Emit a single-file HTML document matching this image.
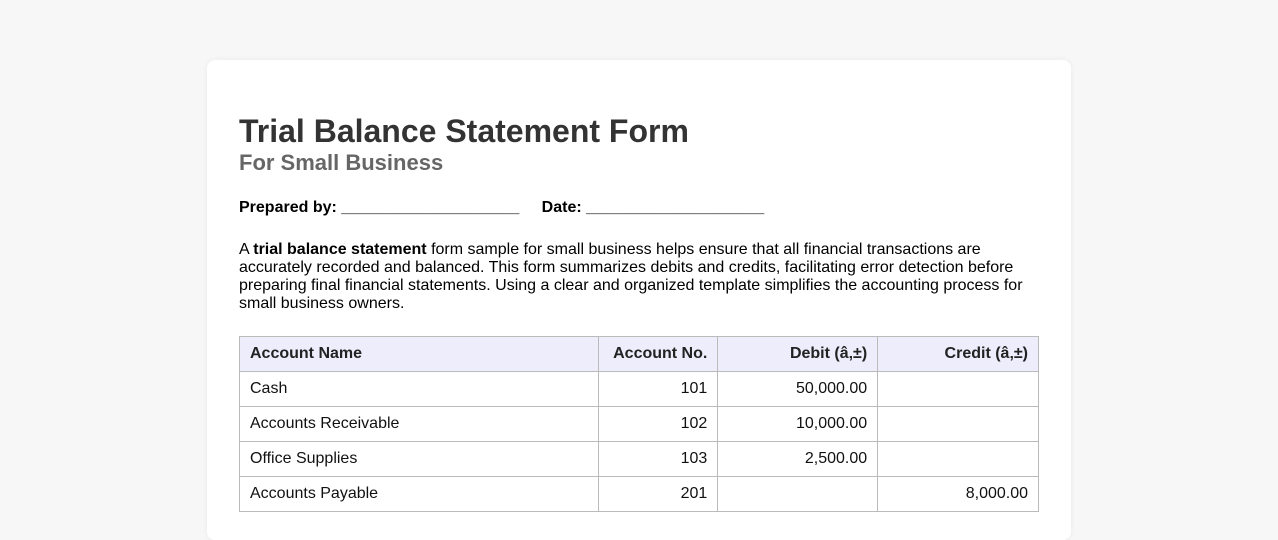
<!DOCTYPE html>
<html><head><style>
html,body{margin:0;height:501px;overflow:hidden;}
body{background:#f7f7f7;font-family:"Liberation Sans",Arial,sans-serif;color:#000;}
.card{position:absolute;left:207px;top:60px;width:864px;height:480px;background:#fff;border-radius:8px;box-shadow:0 0 6px rgba(0,0,0,0.06);}
.in{position:absolute;left:32px;top:0;width:800px;}
h1{position:absolute;top:53px;margin:0;font-size:32px;line-height:37px;color:#333;white-space:nowrap;}
h2{position:absolute;top:90px;margin:0;font-size:22px;line-height:25px;color:#666;white-space:nowrap;}
.prep{position:absolute;top:139px;font-size:16px;line-height:18px;font-weight:bold;white-space:nowrap;}
p{position:absolute;top:181px;margin:0;font-size:16px;line-height:18px;width:800px;}
table{position:absolute;top:276px;left:0;border-collapse:collapse;width:800px;font-size:16px;}
td,th{border:1px solid #bbb;height:35px;padding:0 10px;box-sizing:border-box;}
th{background:#ededfc;text-align:right;color:#222;}
th:first-child,td:first-child{text-align:left;}
td{text-align:right;color:#111;}
</style></head><body>
<div class="card"><div class="in">
<h1>Trial Balance Statement Form</h1>
<h2>For Small Business</h2>
<div class="prep">Prepared by: ____________________ <span style="margin-left:18px">Date: ____________________</span></div>
<p>A <b>trial balance statement</b> form sample for small business helps ensure that all financial transactions are accurately recorded and balanced. This form summarizes debits and credits, facilitating error detection before preparing final financial statements. Using a clear and organized template simplifies the accounting process for small business owners.</p>
<table>
<colgroup><col style="width:360px"><col style="width:119px"><col style="width:160px"><col style="width:161px"></colgroup>
<tr><th>Account Name</th><th>Account No.</th><th>Debit (â‚±)</th><th>Credit (â‚±)</th></tr>
<tr><td>Cash</td><td>101</td><td>50,000.00</td><td></td></tr>
<tr><td>Accounts Receivable</td><td>102</td><td>10,000.00</td><td></td></tr>
<tr><td>Office Supplies</td><td>103</td><td>2,500.00</td><td></td></tr>
<tr><td>Accounts Payable</td><td>201</td><td></td><td>8,000.00</td></tr>
</table>
</div></div>
</body></html>
